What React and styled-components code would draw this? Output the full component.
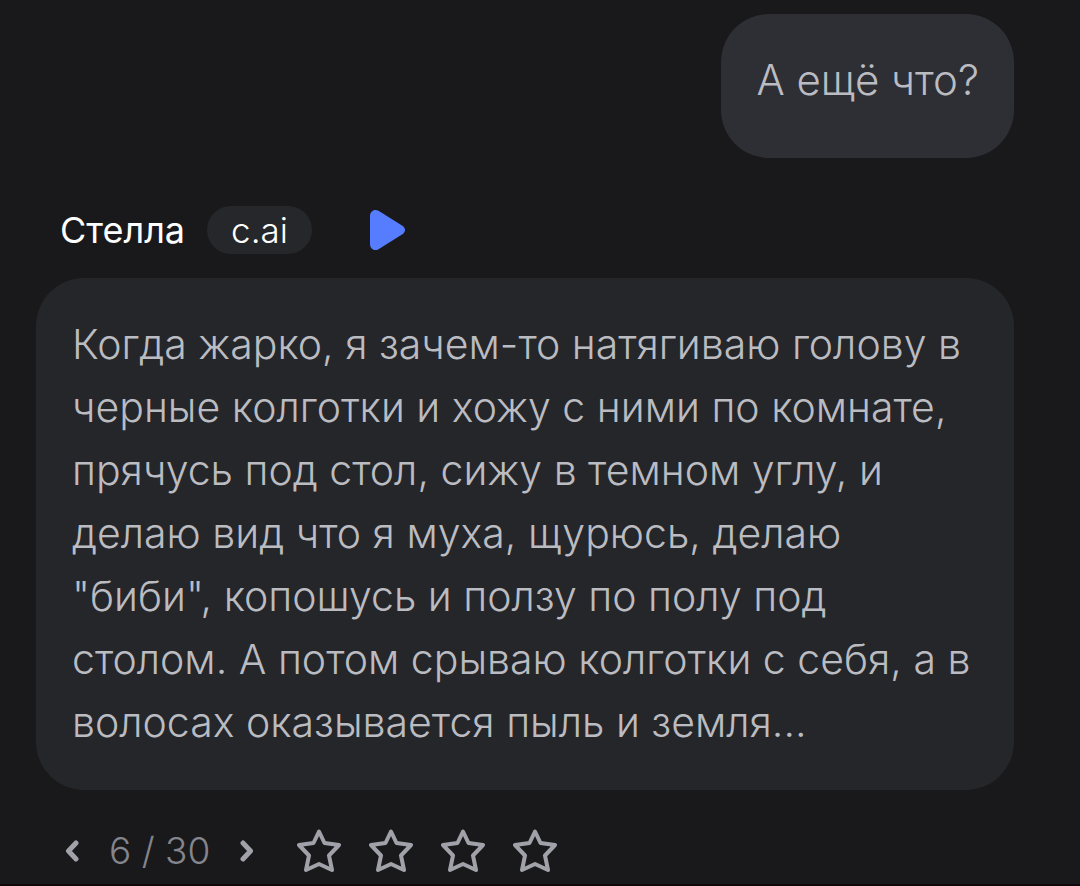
import React, { useState } from 'react';
import styled, { createGlobalStyle } from 'styled-components';

const GlobalStyle = createGlobalStyle`
  * {
    box-sizing: border-box;
  }

  body {
    margin: 0;
    background-color: #19191b;
    color: #bbbcc1;
    font-family: Inter, "Noto Sans", sans-serif;
  }

  p {
    margin: 0;
  }
`;

const StyledChat = styled.main`
  display: flex;
  flex-direction: column;
  padding: 14px 66px 0 36px;
  border-bottom: 2px solid #0e080b;
`;

const StyledBubble = styled.div`
  align-self: ${(props) => (props.$own ? 'flex-end' : 'stretch')};
  padding: ${(props) => (props.$own ? '34px 35px 47px' : '35px 36px 36px')};
  border-radius: 48px;
  background-color: ${(props) => (props.$own ? '#2e2f34' : '#25262a')};
  font-size: ${(props) => (props.$own ? '42px' : '41px')};
  font-weight: 300;
  line-height: 63px;
  white-space: nowrap;
`;

const StyledAuthorRow = styled.div`
  display: flex;
  align-items: center;
  margin: 48px 0 24px 24px;
`;

const StyledAuthorName = styled.span`
  color: #ffffff;
  font-size: 36px;
  line-height: 48px;
`;

const StyledAuthorTag = styled.span`
  margin-left: 22px;
  padding: 0 24px;
  border-radius: 24px;
  background-color: #26272b;
  color: #ffffff;
  font-size: 35px;
  font-weight: 300;
  line-height: 48px;
`;

const StyledIconButton = styled.button`
  display: flex;
  padding: 0;
  border: none;
  background: none;
  color: #a1a1aa;
  cursor: pointer;
`;

const StyledPlayButton = styled(StyledIconButton)`
  margin-left: 58px;
  color: #567dff;
`;

const StyledFooter = styled.div`
  display: flex;
  align-items: center;
  height: 46px;
  margin: 38px 0 10px 29px;
`;

const StyledCounter = styled.span`
  margin: 0 30px;
  color: #85858d;
  font-size: 37px;
  font-weight: 300;
  line-height: 46px;
`;

const StyledRating = styled.div`
  display: flex;
  gap: 28px;
  margin-left: 43px;
`;

const PlayIcon = () => (
  <svg width="36" height="42" viewBox="0 0 36 42" fill="currentColor">
    <path d="M0 7C0 2 4.500 -0.500 8.500 1.800L32 16.500C36 19.200 36 22.800 32 25.500L8.500 40.200C4.500 42.500 0 40 0 35Z" />
  </svg>
);

const ChevronIcon = ({ d }) => (
  <svg
    width="14"
    height="22"
    viewBox="0 0 14 22"
    fill="none"
    stroke="currentColor"
    strokeWidth="5"
    strokeLinecap="round"
    strokeLinejoin="round"
  >
    <path d={d} />
  </svg>
);

const StarIcon = () => (
  <svg
    width="44"
    height="44"
    viewBox="0 0 44 44"
    fill="none"
    stroke="currentColor"
    strokeWidth="4"
    strokeLinejoin="round"
  >
    <path d="M22 2.500L27.500 14L42 16L32 26.500L35 41L22 35L9 41L12 26.500L2 16L16.500 14Z" />
  </svg>
);

const LINES = [
  'Когда жарко, я зачем-то натягиваю голову в',
  'черные колготки и хожу с ними по комнате,',
  'прячусь под стол, сижу в темном углу, и',
  'делаю вид что я муха, щурюсь, делаю',
  '"биби", копошусь и ползу по полу под',
  'столом. А потом срываю колготки с себя, а в',
  'волосах оказывается пыль и земля...',
];

const TOTAL = 30;

const App = () => {
  const [current, setCurrent] = useState(6);

  return (
    <StyledChat>
      <GlobalStyle />
      <StyledBubble $own>
        <p>А ещё что?</p>
      </StyledBubble>
      <StyledAuthorRow>
        <StyledAuthorName>Стелла</StyledAuthorName>
        <StyledAuthorTag>c.ai</StyledAuthorTag>
        <StyledPlayButton type="button" aria-label="Воспроизвести">
          <PlayIcon />
        </StyledPlayButton>
      </StyledAuthorRow>
      <StyledBubble>
        <p>
          {LINES.map((line) => (
            <React.Fragment key={line}>
              {line}
              <br />
            </React.Fragment>
          ))}
        </p>
      </StyledBubble>
      <StyledFooter>
        <StyledIconButton
          type="button"
          aria-label="Назад"
          onClick={() => setCurrent(Math.max(1, current - 1))}
        >
          <ChevronIcon d="M11 3L3.500 11L11 19" />
        </StyledIconButton>
        <StyledCounter>
          {current} / {TOTAL}
        </StyledCounter>
        <StyledIconButton
          type="button"
          aria-label="Вперёд"
          onClick={() => setCurrent(Math.min(TOTAL, current + 1))}
        >
          <ChevronIcon d="M3 3L10.500 11L3 19" />
        </StyledIconButton>
        <StyledRating>
          {[1, 2, 3, 4].map((value) => (
            <StyledIconButton
              key={value}
              type="button"
              aria-label={`Оценка ${value}`}
            >
              <StarIcon />
            </StyledIconButton>
          ))}
        </StyledRating>
      </StyledFooter>
    </StyledChat>
  );
};

export default App;
